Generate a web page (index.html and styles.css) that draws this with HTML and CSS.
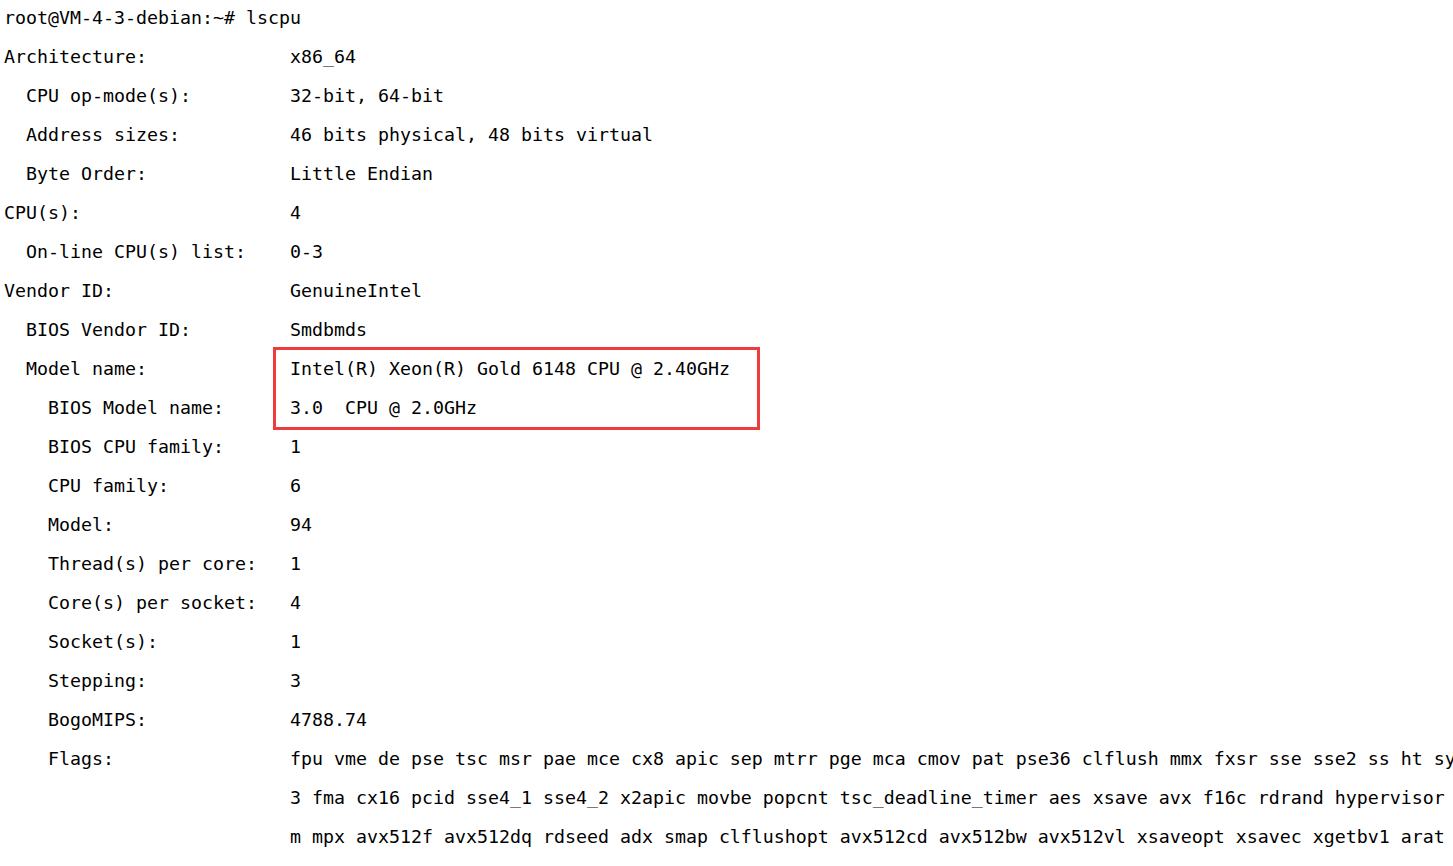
FILE: index.html
```html
<!DOCTYPE html>
<html>
<head>
<meta charset="utf-8">
<link rel="stylesheet" href="styles.css">
</head>
<body>
<div class="term">
  <div class="line">root@VM-4-3-debian:~# lscpu</div>
  <div class="row"><span class="k">Architecture:</span><span class="v">x86_64</span></div>
  <div class="row"><span class="k l1">CPU op-mode(s):</span><span class="v">32-bit, 64-bit</span></div>
  <div class="row"><span class="k l1">Address sizes:</span><span class="v">46 bits physical, 48 bits virtual</span></div>
  <div class="row"><span class="k l1">Byte Order:</span><span class="v">Little Endian</span></div>
  <div class="row"><span class="k">CPU(s):</span><span class="v">4</span></div>
  <div class="row"><span class="k l1">On-line CPU(s) list:</span><span class="v">0-3</span></div>
  <div class="row"><span class="k">Vendor ID:</span><span class="v">GenuineIntel</span></div>
  <div class="row"><span class="k l1">BIOS Vendor ID:</span><span class="v">Smdbmds</span></div>
  <div class="row"><span class="k l1">Model name:</span><span class="v">Intel(R) Xeon(R) Gold 6148 CPU @ 2.40GHz</span></div>
  <div class="row"><span class="k l2">BIOS Model name:</span><span class="v">3.0  CPU @ 2.0GHz</span></div>
  <div class="row"><span class="k l2">BIOS CPU family:</span><span class="v">1</span></div>
  <div class="row"><span class="k l2">CPU family:</span><span class="v">6</span></div>
  <div class="row"><span class="k l2">Model:</span><span class="v">94</span></div>
  <div class="row"><span class="k l2">Thread(s) per core:</span><span class="v">1</span></div>
  <div class="row"><span class="k l2">Core(s) per socket:</span><span class="v">4</span></div>
  <div class="row"><span class="k l2">Socket(s):</span><span class="v">1</span></div>
  <div class="row"><span class="k l2">Stepping:</span><span class="v">3</span></div>
  <div class="row"><span class="k l2">BogoMIPS:</span><span class="v">4788.74</span></div>
  <div class="row"><span class="k l2">Flags:</span><span class="v">fpu vme de pse tsc msr pae mce cx8 apic sep mtrr pge mca cmov pat pse36 clflush mmx fxsr sse sse2 ss ht sy</span></div>
  <div class="row"><span class="k"></span><span class="v">3 fma cx16 pcid sse4_1 sse4_2 x2apic movbe popcnt tsc_deadline_timer aes xsave avx f16c rdrand hypervisor</span></div>
  <div class="row"><span class="k"></span><span class="v">m mpx avx512f avx512dq rdseed adx smap clflushopt avx512cd avx512bw avx512vl xsaveopt xsavec xgetbv1 arat</span></div>
</div>
<div class="mark"></div>
</body>
</html>
```
FILE: styles.css
```css
html, body {
  margin: 0;
  padding: 0;
  background: #ffffff;
  overflow: hidden;
  width: 1453px;
  height: 866px;
}

body {
  position: relative;
}

.term {
  margin-top: -2px;
  padding-left: 4px;
  font-family: "DejaVu Sans Mono", "Liberation Mono", monospace;
  font-size: 18.27px;
  line-height: 39px;
  color: #000000;
}

.line {
  height: 39px;
  white-space: pre;
}

.row {
  display: flex;
  height: 39px;
}

.k {
  flex: 0 0 286px;
  box-sizing: border-box;
  white-space: pre;
}

.k.l1 {
  padding-left: 22px;
}

.k.l2 {
  padding-left: 44px;
}

.v {
  white-space: pre;
}

.mark {
  position: absolute;
  left: 273px;
  top: 347px;
  width: 487px;
  height: 83px;
  box-sizing: border-box;
  border: 3px solid #ef3b3b;
}
```
